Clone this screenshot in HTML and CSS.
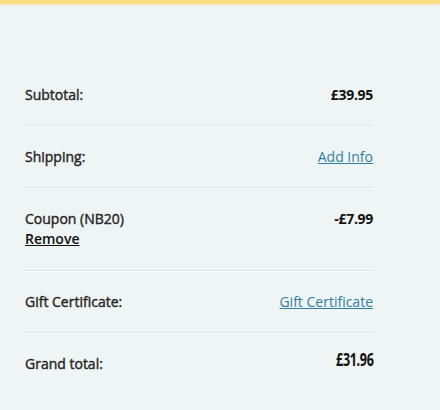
FILE: index.html
```html
<!DOCTYPE html>
<html lang="en">
<head>
    <meta charset="UTF-8">
    <meta name="viewport" content="width=device-width, initial-scale=1.0">
    <title>Order Summary</title>
    <link rel="stylesheet" href="styles.css">
</head>
<body>
    <div class="top-bar"></div>
    <div class="summary">
        <div class="summary-row">
            <span class="label">Subtotal:</span>
            <span class="price">£39.95</span>
        </div>
        <div class="summary-row">
            <span class="label">Shipping:</span>
            <a class="link" href="#">Add Info</a>
        </div>
        <div class="summary-row coupon-row">
            <div class="label-stack">
                <span class="label">Coupon (NB20)</span>
                <a class="remove" href="#">Remove</a>
            </div>
            <span class="price">-£7.99</span>
        </div>
        <div class="summary-row">
            <span class="label">Gift Certificate:</span>
            <a class="link" href="#">Gift Certificate</a>
        </div>
        <div class="summary-row total-row">
            <span class="label">Grand total:</span>
            <span class="price grand">£31.96</span>
        </div>
    </div>
</body>
</html>
```

FILE: styles.css
```css
body {
    margin: 0;
    font-family: "Open Sans", Arial, sans-serif;
    background-color: #eff4f4;
    color: #333;
    min-height: 410px;
}

.top-bar {
    height: 4px;
    background: #f9dc81;
    box-shadow: 0 1px 3px rgba(240, 220, 150, 0.6);
}

.summary {
    width: 349px;
    margin: 60px 0 0 24px;
}

.summary-row {
    display: flex;
    justify-content: space-between;
    align-items: flex-start;
    padding: 21px 0 20px 1px;
    line-height: 20px;
    border-bottom: 1px solid #dde4e4;
    box-shadow: 0 1px 0 #fbfdfd;
}

.coupon-row {
    padding-bottom: 21px;
}

.total-row {
    border-bottom: none;
    box-shadow: none;
}

.label {
    font-size: 14px;
    font-weight: 400;
    color: #262626;
    -webkit-text-stroke: 0.4px #262626;
}

.label-stack {
    display: flex;
    flex-direction: column;
}

.remove {
    font-size: 14px;
    font-weight: 600;
    color: #111;
    text-decoration: underline;
    width: max-content;
}

.price {
    font-size: 14px;
    font-weight: 700;
    color: #111;
    letter-spacing: -0.3px;
}

.grand {
    display: inline-block;
    font-size: 17px;
    letter-spacing: -0.5px;
    margin-top: -4px;
    transform: scaleX(0.74);
    transform-origin: right center;
}

.link {
    font-size: 14px;
    color: #2f7fa3;
    text-decoration: underline;
}
```
